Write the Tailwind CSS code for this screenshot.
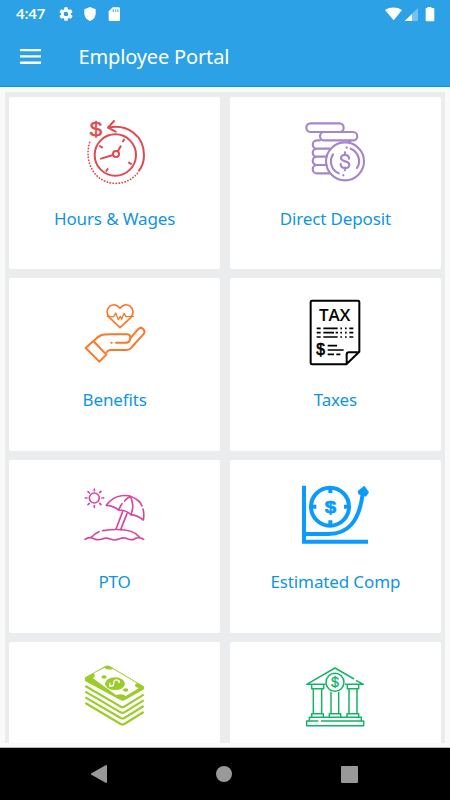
<!DOCTYPE html>
<html lang="en">
<head>
    <meta charset="UTF-8">
    <meta name="viewport" content="width=device-width, initial-scale=1.0">
    <title>Employee Portal</title>
    <script src="https://cdn.jsdelivr.net/npm/@tailwindcss/browser@4"></script>
</head>
<body class="w-[450px] h-[800px] overflow-hidden flex flex-col bg-[#fafafa] font-['Open_Sans','Noto_Sans',sans-serif]">

    <!-- Header -->
    <header class="h-[87px] shrink-0 bg-[#2ca1e6] border-b border-[#0a94ea] text-white">
        <!-- Status bar -->
        <div class="h-[27px] flex items-center pl-4 pr-[15px]">
            <span class="w-[42px] text-[15px] font-semibold leading-none tracking-[-0.2px]">4:47</span>
            <svg class="w-4 h-4" viewBox="0 0 24 24" fill="currentColor"><path d="M19.4 13a7.500 7.500 0 0 0 0-2l2.100-1.650a.5.5 0 0 0 .12-.64l-2-3.460a.5.5 0 0 0-.61-.22l-2.490 1a7.300 7.300 0 0 0-1.690-.98l-.38-2.650A.5.500 0 0 0 14 2h-4a.5.5 0 0 0-.49.42l-.38 2.650c-.61.25-1.170.59-1.690.98l-2.490-1a.5.5 0 0 0-.61.22l-2 3.460a.5.5 0 0 0 .12.64L4.600 11a7.900 7.900 0 0 0 0 2l-2.110 1.650a.5.5 0 0 0-.12.64l2 3.460c.12.22.39.3.61.22l2.490-1c.52.4 1.080.73 1.690.98l.38 2.650c.03.24.24.42.49.42h4c.25 0 .46-.18.49-.42l.38-2.650a7.700 7.700 0 0 0 1.690-.98l2.490 1c.23.09.49 0 .61-.22l2-3.460a.5.5 0 0 0-.12-.64zM12 15.500a3.500 3.500 0 1 1 0-7 3.500 3.500 0 0 1 0 7z"/></svg>
            <svg class="w-4 h-4 ml-2" viewBox="0 0 24 24" fill="currentColor"><path d="M12 1.500 3.500 5v6c0 5.500 3.600 10.200 8.500 11.500 4.900-1.300 8.500-6 8.500-11.500V5z"/></svg>
            <svg class="w-4 h-4 ml-2" viewBox="0 0 24 24" fill="currentColor"><path d="M19 2h-9L4 8v13c0 1 .9 1.500 2 1.500h13c1 0 2-.5 2-1.500V4c0-1-1-2-2-2z"/><path d="M10 5h2v4h-2zm3.500 0h2v4h-2zm3.500 0h2v4h-2z" fill="#2ca1e6" opacity=".7"/></svg>
            <div class="grow"></div>
            <svg class="w-[50px] h-4" viewBox="0 0 150 48" fill="currentColor">
                <path d="M0 12C14 2 37 2 51 12L26 43z"/>
                <path d="M99 6V45H59z" opacity=".35"/>
                <path d="M81 24V45H59z"/>
                <path d="M122 6h5V3h12v3h6q3 0 3 3v34q0 3-3 3h-20q-3 0-3-3z"/>
            </svg>
        </div>
        <!-- Title bar -->
        <div class="h-[59px] flex items-center pl-5">
            <svg class="w-[21px] h-[15px]" viewBox="0 0 21 15" fill="currentColor"><path d="M0 0h21v2.300H0zM0 6.300h21v2.300H0zM0 12.600h21V15H0z"/></svg>
            <h1 class="ml-[37.500px] pt-px text-[20px] leading-none tracking-[-0.15px] font-['Noto_Sans',sans-serif]">Employee Portal</h1>
        </div>
    </header>

    <!-- Menu tiles -->
    <main class="mt-[5px] mx-[5px] h-[651px] shrink-0 overflow-hidden bg-[#ebeced] px-1 pt-[4.700px] grid grid-cols-2 auto-rows-[172.500px] gap-x-[9.500px] gap-y-[9.250px] text-[17px] leading-6 tracking-[-0.13px] text-[#0f95df] font-['Noto_Sans',sans-serif]">

        <a class="bg-white rounded-xs flex flex-col items-center pt-[13px]">
            <svg class="w-20 h-20" viewBox="0 0 240 240" fill="none" stroke="#df4a50" stroke-width="6" stroke-linecap="round" stroke-linejoin="round">
                <circle cx="121" cy="135" r="62"/>
                <circle cx="123" cy="132" r="9"/>
                <path d="M129 123l8-14M144 94l3-5M114 135l-36 11M75 108l6 4M162 158l6 4M98 177l-4 6"/>
                <path d="M117 33 99 53l23 12M99 53c60-13 108 27 108 82 0 18-5 34-15 47"/>
                <path d="M44 97C25 160 63 220 121 220c28 0 51-11 69-33" stroke-width="5" stroke-dasharray="1 8"/>
                <text x="63" y="79" text-anchor="middle" font-size="61" textLength="37" lengthAdjust="spacingAndGlyphs" font-family="Liberation Sans" fill="#df4a50" stroke-width="1.500">$</text>
            </svg>
            <span class="mt-[17px]">Hours &amp; Wages</span>
        </a>

        <a class="bg-white rounded-xs flex flex-col items-center pt-[13px]">
            <svg class="w-20 h-20" viewBox="0 0 240 240" fill="none" stroke="#a586cc" stroke-width="6.500" stroke-linecap="round">
                <rect x="34" y="40" width="112" height="26" rx="13"/>
                <rect x="75" y="66" width="112" height="25" rx="12.500"/>
                <path d="M75 91h-9c-17 0-17 25 0 25h38M165 92q0 5-5 5M66 116c-17 0-17 24 0 24h29M66 140c-17 0-17 25 0 25h29M66 165c-17 0-17 25 0 25h39"/>
                <circle cx="150" cy="154" r="57"/>
                <path d="M114 133c-13 22-4 48 17 57M167 116c24 10 32 38 19 58"/>
                <path d="M155 112v1M145 195v1"/>
                <path d="M162 146c0-15-24-15-24-2 0 13 25 7 25 20 0 14-26 14-26-2M150 127v8M150 173v8"/>
            </svg>
            <span class="mt-[17px]">Direct Deposit</span>
        </a>

        <a class="bg-white rounded-xs flex flex-col items-center pt-[13px]">
            <svg class="w-20 h-20" viewBox="0 -1 240 240" fill="none" stroke="#fa7827" stroke-width="5" stroke-linecap="round" stroke-linejoin="round">
                <path d="M135 109 103 78c-21-24 13-54 32-27 18-27 53 3 33 27z"/>
                <path d="M97 76h19l6-11 8 20 6-10 4 9 7-18 6 10h22" stroke-width="4"/>
                <path d="M32 170 55 149 94 190 73 211z" stroke-width="6"/>
                <path d="M59 146c16-17 25-17 49-17h49c14 0 11 25-4 25h-30M165 142l24-28c10-11 26 3 16 15l-37 41c-4 5-10 6-17 6h-45c-7 0-9 3-11 7" stroke-width="6"/>
                <path d="M109 154h1" stroke-width="6"/>
            </svg>
            <span class="mt-[17px]">Benefits</span>
        </a>

        <a class="bg-white rounded-xs flex flex-col items-center pt-[13px]">
            <svg class="w-20 h-20" viewBox="0 -1 240 240" fill="none" stroke="#000" stroke-width="6" stroke-linejoin="round">
                <path d="M154 219H51q-4 0-4-4V32q0-4 4-4h138q4 0 4 4v149zM155 218v-28q0-7 7-7h29"/>
                <text x="119" y="89" text-anchor="middle" font-size="51" textLength="94" font-family="Open Sans" font-weight="600" fill="#000" stroke="none">TAX</text>
                <path d="M65 111h12M85 111h43M136 111h5M150 111h5M163 111h12M65 124h12M85 124h32M122 124h7M136 124h5M150 124h5M163 124h12M65 137h12M85 137h43M136 137h5M150 137h5M163 137h12M98 163h28M98 176h48M98 189h19M124 189h12" stroke-width="5"/>
                <text x="77" y="192" text-anchor="middle" font-size="47" font-family="Liberation Sans" fill="#000" stroke-width="2">$</text>
            </svg>
            <span class="mt-[17px]">Taxes</span>
        </a>

        <a class="bg-white rounded-xs flex flex-col items-center pt-[13px]">
            <svg class="w-20 h-20" viewBox="0 -5 240 240" fill="none" stroke="#d8469d" stroke-width="5" stroke-linecap="round" stroke-linejoin="round">
                <circle cx="58" cy="70" r="15"/>
                <path d="M58 43v5M58 93v5M31 70h5M81 70h5M39 51l4 4M74 86l4 4M39 90l4-4M74 54l4-4"/>
                <!-- umbrella canopy -->
                <path d="M94 92C116 60 160 52 191 79C197 84 199 89 201 94M204 103c3 11 3 22 1 33-12-9-22-15-37-16-12-11-22-14-37-14-10-8-22-14-37-14"/>
                <path d="M131 106c3-8 6-13 10-19M149 79c5-6 10-10 17-14 9 17 9 37 2 55"/>
                <path d="M143 111l-20 52M156 117l-19 48"/>
                <path d="M72 171c-10 4-17 10-23 17M83 168c43-6 90-8 110 19M30 194c9-7 21-5 27-2 15 8 22 1 31-1 13-3 19 5 31 5 13 0 19-9 32-6 9 3 17 9 27 3 9-6 21-4 28 1"/>
            </svg>
            <span class="mt-[17px]">PTO</span>
        </a>

        <a class="bg-white rounded-xs flex flex-col items-center pt-[13px]">
            <svg class="w-20 h-20" viewBox="0 -5 240 240" fill="none" stroke="#0b9bff" stroke-width="12">
                <path d="M27 33v168h192M32 178h68c60 0 92-38 103-119"/>
                <path d="M188 49 208 33 222 53 213 66 190 59z" fill="#0b9bff" stroke="none"/>
                <circle cx="105" cy="96" r="57"/>
                <path d="M106 37v18M106 137v18M47 96h17M147 96h17"/>
                <text x="106" y="114" text-anchor="middle" font-size="51" textLength="34" lengthAdjust="spacingAndGlyphs" font-weight="bold" font-family="Liberation Sans" fill="#0b9bff" stroke-width="2">$</text>
            </svg>
            <span class="mt-[17px]">Estimated Comp</span>
        </a>

        <a class="bg-white rounded-xs flex flex-col items-center pt-[13px]">
            <svg class="w-20 h-20" viewBox="0 0 240 240" fill="none" stroke="#9bcc28" stroke-width="6" stroke-linejoin="round">
                <path d="M31 68 92 34q6-2 11 0l103 61v7l-57 32q-6 3-12 0L31 77z" fill="#9bcc28" stroke-width="3"/>
                <path d="M54 70q10-8 2-15l33-17q7 9 25 4l72 43q-15 7 5 15l-39 23q-9-9-29-3z" fill="#fff" stroke="none"/>
                <ellipse cx="120" cy="86" rx="30" ry="19" fill="#9bcc28" stroke="none"/>
                <ellipse cx="87" cy="66" rx="8" ry="5" fill="#9bcc28" stroke="none"/>
                <ellipse cx="152" cy="105" rx="8" ry="5" fill="#9bcc28" stroke="none"/>
                <path d="M132 84c4-9-13-13-15-5-2 7 2 13-6 14-7 0-10-6-5-9M134 77l-5 3M102 94l5-3" stroke="#fff" stroke-width="4"/>
                <path d="M31 93l106 62q6 3 11 0l58-36M31 110l106 62q6 3 11 0l58-36M31 127l106 62q6 3 11 0l58-36M31 144l106 63q6 3 11 0l58-36" stroke-width="6.500"/>
            </svg>
        </a>

        <a class="bg-white rounded-xs flex flex-col items-center pt-[13px]">
            <svg class="w-20 h-20" viewBox="0 0 240 240" fill="none" stroke="#15b367" stroke-width="4.500" stroke-linejoin="round">
                <path d="M92 88H35l85-49 57 33M183 76l22 12h-55"/>
                <circle cx="120" cy="82" r="27"/>
                <text x="120" y="97" text-anchor="middle" font-size="43" font-family="Liberation Sans" fill="#15b367" stroke-width="1">$</text>
                <path d="M50 90v11h36V90M157 90v11h34V90M55 101v75M80 101v75M162 101v75M186 101v75M108 110v66M131 110v66M50 187v-11h35v11M103 187v-11h34v11M156 187v-11h35v11M43 198v-11h156v11M70 198H35v14h171v-14H78"/>
            </svg>
        </a>
    </main>

    <!-- Navigation bar -->
    <nav class="mt-1 grow bg-black border-t border-[#b5b5b5] flex items-center justify-between pl-[91px] pr-[92px] text-[#999]">
        <svg class="w-4 h-[18px]" viewBox="0 0 16 18" fill="currentColor"><path d="M15 0q1 0 1 1v16q0 1-1 1L0 9.500v-1z"/></svg>
        <div class="w-4 h-4 rounded-full bg-[#999]"></div>
        <div class="w-[17px] h-[17px] rounded-[1px] bg-[#999]"></div>
    </nav>
</body>
</html>
